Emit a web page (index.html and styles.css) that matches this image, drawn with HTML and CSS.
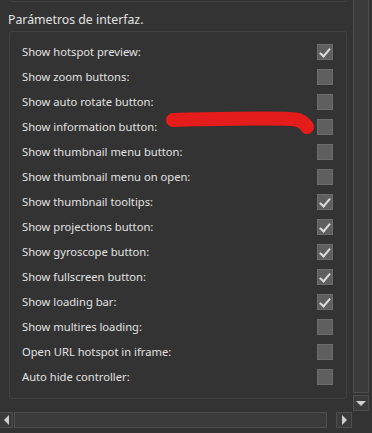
FILE: index.html
```html
<!DOCTYPE html>
<html lang="es">
<head>
    <meta charset="UTF-8">
    <meta name="viewport" content="width=device-width, initial-scale=1.0">
    <title>Parámetros de interfaz</title>
    <link rel="stylesheet" href="styles.css">
</head>
<body>
    <div class="window">
        <div class="content">
            <div class="prev-box"></div>
            <div class="section-title">Parámetros de interfaz.</div>
            <div class="group">
                <div class="row"><span>Show hotspot preview:</span><span class="check on"></span></div>
                <div class="row"><span>Show zoom buttons:</span><span class="check"></span></div>
                <div class="row"><span>Show auto rotate button:</span><span class="check"></span></div>
                <div class="row"><span>Show information button:</span><span class="check"></span></div>
                <div class="row"><span>Show thumbnail menu button:</span><span class="check"></span></div>
                <div class="row"><span>Show thumbnail menu on open:</span><span class="check"></span></div>
                <div class="row"><span>Show thumbnail tooltips:</span><span class="check on"></span></div>
                <div class="row"><span>Show projections button:</span><span class="check on"></span></div>
                <div class="row"><span>Show gyroscope button:</span><span class="check on"></span></div>
                <div class="row"><span>Show fullscreen button:</span><span class="check on"></span></div>
                <div class="row"><span>Show loading bar:</span><span class="check on"></span></div>
                <div class="row"><span>Show multires loading:</span><span class="check"></span></div>
                <div class="row"><span>Open URL hotspot in iframe:</span><span class="check"></span></div>
                <div class="row"><span>Auto hide controller:</span><span class="check"></span></div>
            </div>
            <svg class="scribble" width="160" height="34" viewBox="0 0 160 34">
                <path d="M13 12 C45 11 110 10 130 11 C138 11 144 14 147 19" fill="none" stroke="#e41c1c" stroke-width="14" stroke-linecap="round"/>
            </svg>
        </div>
        <div class="vscroll">
            <div class="vthumb"></div>
            <div class="sbtn down"></div>
        </div>
        <div class="hscroll">
            <div class="sbtn left"></div>
            <div class="hthumb"></div>
            <div class="htrack"></div>
            <div class="sbtn right"></div>
        </div>
        <div class="corner"></div>
    </div>
</body>
</html>
```

FILE: styles.css
```css
* {
    margin: 0;
    padding: 0;
    box-sizing: border-box;
}
body {
    background: #333333;
    font-family: "Noto Sans", "Open Sans", Arial, sans-serif;
    font-size: 11.2px;
    color: #e2e2e2;
    width: 372px;
    height: 433px;
    overflow: hidden;
}
.window {
    display: grid;
    grid-template-columns: 352px 20px;
    grid-template-rows: 411px 22px;
    height: 433px;
}
.content {
    position: relative;
    overflow: hidden;
    padding-left: 9px;
}
.prev-box {
    width: 338px;
    height: 2px;
    border: 1px solid #424242;
    border-top: none;
    border-radius: 0 0 3px 3px;
}
.section-title {
    margin: 9px 0 0 -1px;
    height: 20px;
    line-height: 18px;
    font-size: 12.3px;
}
.group {
    width: 338px;
    height: 368px;
    border: 1px solid #424242;
    border-radius: 3px;
    padding: 7px 13px 0 12px;
}
.row {
    height: 25px;
    display: flex;
    align-items: center;
    justify-content: space-between;
}
.check {
    width: 16px;
    height: 16px;
    background: #5f5f5f;
    border: 1px solid #6c6c6c;
    position: relative;
}
.check.on::after {
    content: "";
    position: absolute;
    left: 4px;
    top: 1px;
    width: 4px;
    height: 9px;
    border: solid #dcdcdc;
    border-width: 0 2px 2px 0;
    transform: rotate(40deg);
}
.scribble {
    position: absolute;
    left: 160px;
    top: 108px;
}
.vscroll {
    padding: 0 3px 0 1px;
    display: flex;
    flex-direction: column;
    gap: 2px;
}
.vthumb {
    height: 393px;
    background: #3b3b3b;
    border: 1px solid #4e4e4e;
    border-top: none;
}
.sbtn {
    background: #3b3b3b;
    border: 1px solid #4e4e4e;
    display: flex;
    align-items: center;
    justify-content: center;
    flex: none;
}
.sbtn.down {
    height: 16px;
}
.sbtn.down::after {
    content: "";
    border-left: 5px solid transparent;
    border-right: 5px solid transparent;
    border-top: 5px solid #d0d0d0;
}
.hscroll {
    display: flex;
    padding-top: 1px;
    height: 17px;
    gap: 1px;
}
.sbtn.left {
    width: 13px;
    border-left: none;
}
.sbtn.left::after {
    content: "";
    border-top: 5px solid transparent;
    border-bottom: 5px solid transparent;
    border-right: 5px solid #d0d0d0;
}
.hthumb {
    width: 314px;
    background: #3b3b3b;
    border: 1px solid #4e4e4e;
}
.htrack {
    width: 7px;
}
.sbtn.right {
    width: 16px;
}
.sbtn.right::after {
    content: "";
    border-top: 5px solid transparent;
    border-bottom: 5px solid transparent;
    border-left: 5px solid #d0d0d0;
}
.corner {
    background: #333333;
}
```
